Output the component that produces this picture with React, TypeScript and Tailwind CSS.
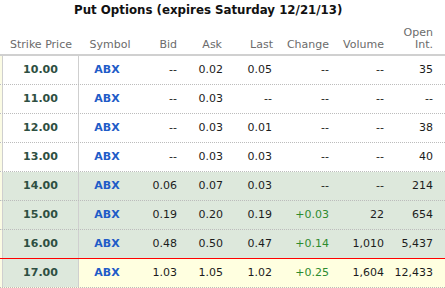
const rows = [
  { strike: "10.00", bid: "--", ask: "0.02", last: "0.05", change: "--", volume: "--", oi: "35", itm: false },
  { strike: "11.00", bid: "--", ask: "0.03", last: "--", change: "--", volume: "--", oi: "--", itm: false },
  { strike: "12.00", bid: "--", ask: "0.03", last: "0.01", change: "--", volume: "--", oi: "38", itm: false },
  { strike: "13.00", bid: "--", ask: "0.03", last: "0.03", change: "--", volume: "--", oi: "40", itm: false },
  { strike: "14.00", bid: "0.06", ask: "0.07", last: "0.03", change: "--", volume: "--", oi: "214", itm: true },
  { strike: "15.00", bid: "0.19", ask: "0.20", last: "0.19", change: "+0.03", volume: "22", oi: "654", itm: true },
  { strike: "16.00", bid: "0.48", ask: "0.50", last: "0.47", change: "+0.14", volume: "1,010", oi: "5,437", itm: true },
  { strike: "17.00", bid: "1.03", ask: "1.05", last: "1.02", change: "+0.25", volume: "1,604", oi: "12,433", itm: true, current: true },
];

const cols = "grid grid-cols-[3px_76px_56px_46px_46px_50px_56px_55px_49px_1fr]";

export default function App() {
  return (
    <div className="w-[445px] h-[288px] overflow-hidden bg-white font-['DejaVu_Sans',sans-serif] text-[11px]">
      {/* title */}
      <div className="h-[19px] pt-[2px] pl-[74px] text-[11.8px] leading-[16px] font-bold text-[#111]">
        Put Options (expires Saturday 12/21/13)
      </div>

      {/* column heads */}
      <div className={`${cols} h-[37px] items-end pb-[3px] border-b-2 border-[#d0d0d0] text-[#6b6b6b] leading-[12px]`}>
        <div />
        <div className="text-center">Strike Price</div>
        <div className="text-center pl-[6px]">Symbol</div>
        <div className="text-right pr-[4px]">Bid</div>
        <div className="text-right pr-[5px]">Ask</div>
        <div className="text-right pr-[4px]">Last</div>
        <div className="text-right pr-[4px]">Change</div>
        <div className="text-right pr-[4px]">Volume</div>
        <div className="text-right pr-[4px]">
          Open
          <br />
          Int.
        </div>
        <div />
      </div>

      {rows.map((r, i) => {
        const rowBg = r.current ? "bg-[#ffffe0]" : r.itm ? "bg-[#dde8dc]" : "bg-white";
        const strikeBg = r.itm ? "bg-[#dde8dc]" : "bg-white";
        const sep =
          i === 6 ? "border-b border-solid border-[#ff0000]" : "border-b border-dotted border-[#bcbcbc]";
        return (
          <div key={r.strike} className={`${cols} h-[29px] items-center leading-[28px] ${rowBg} ${sep}`}>
            <div className="h-full bg-[#fbfbe4] border-r border-[#cfcfcf]" />
            <div className={`h-full text-center font-bold text-[#2e4f42] border-r border-[#cfcfcf] ${strikeBg}`}>
              {r.strike}
            </div>
            <div className="text-center font-bold text-[#1f5cc8]">ABX</div>
            <div className="text-right pr-[4px] text-[#1c1c1c]">{r.bid}</div>
            <div className="text-right pr-[4px] text-[#1c1c1c]">{r.ask}</div>
            <div className="text-right pr-[5px] text-[#1c1c1c]">{r.last}</div>
            <div className={`text-right pr-[4px] ${r.change.startsWith("+") ? "text-[#2e8b2e]" : "text-[#1c1c1c]"}`}>
              {r.change}
            </div>
            <div className="text-right pr-[4px] text-[#1c1c1c]">{r.volume}</div>
            <div className="text-right pr-[4px] text-[#1c1c1c]">{r.oi}</div>
            <div />
          </div>
        );
      })}
    </div>
  );
}
